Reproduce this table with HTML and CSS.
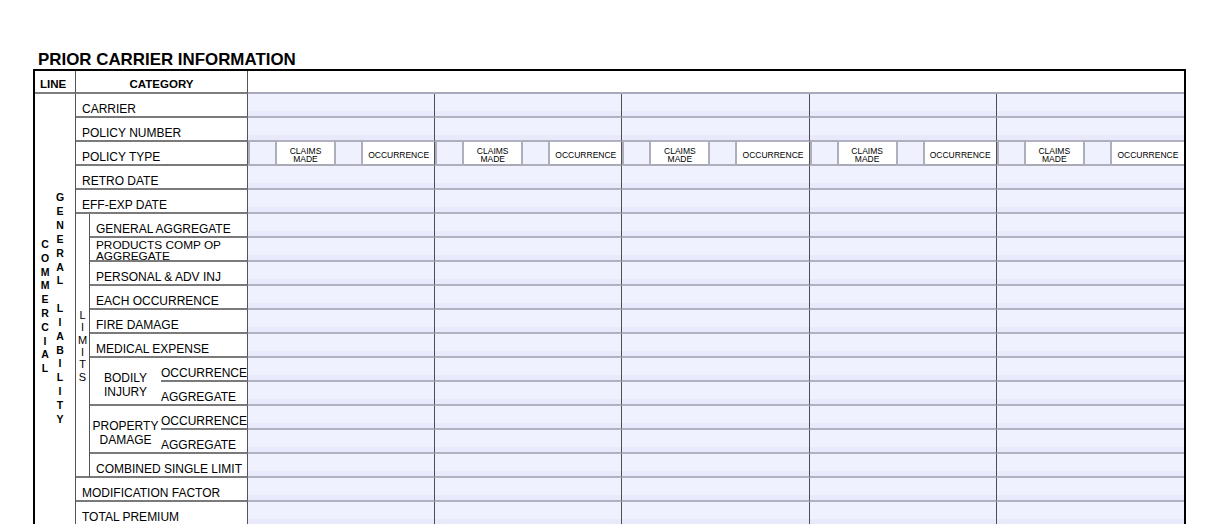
FILE: index.html
```html
<!DOCTYPE html>
<html lang="en">
<head>
<meta charset="utf-8">
<title>Prior Carrier Information</title>
<link rel="stylesheet" href="styles.css">
</head>
<body>
<div class="page">
  <h1 class="title">PRIOR CARRIER INFORMATION</h1>
  <div class="grid">
    <div class="hd hd-line">LINE</div>
    <div class="hd hd-cat">CATEGORY</div>
    <div class="hd-data"></div>

    <div class="linecol">
      <div class="vword">C
O
M
M
E
R
C
I
A
L</div>
      <div class="vword gl">G
E
N
E
R
A
L

L
I
A
B
I
L
I
T
Y</div>
    </div>

    <div class="lab c24 r2">CARRIER</div>
    <div class="lab c24 r3">POLICY NUMBER</div>
    <div class="lab c24 r4">POLICY TYPE</div>
    <div class="lab c24 r5">RETRO DATE</div>
    <div class="lab c24 r6">EFF-EXP DATE</div>

    <div class="limits"><div class="vword thin">L
I
M
I
T
S</div></div>

    <div class="lab c34 r7">GENERAL AGGREGATE</div>
    <div class="lab c34 r8 prod">PRODUCTS COMP OP<br>AGGREGATE</div>
    <div class="lab c34 r9">PERSONAL &amp; ADV INJ</div>
    <div class="lab c34 r10">EACH OCCURRENCE</div>
    <div class="lab c34 r11">FIRE DAMAGE</div>
    <div class="lab c34 r12">MEDICAL EXPENSE</div>

    <div class="lab grp r13">BODILY<br>INJURY</div>
    <div class="lab sub c4 r13">OCCURRENCE</div>
    <div class="lab sub c4 r14">AGGREGATE</div>

    <div class="lab grp r15">PROPERTY<br>DAMAGE</div>
    <div class="lab sub c4 r15">OCCURRENCE</div>
    <div class="lab sub c4 r16">AGGREGATE</div>

    <div class="lab c34 r17">COMBINED SINGLE LIMIT</div>
    <div class="lab c24 r18">MODIFICATION FACTOR</div>
    <div class="lab c24 r19">TOTAL PREMIUM</div>

    <!-- row 2 CARRIER -->
    <div class="dc"></div><div class="dc"></div><div class="dc"></div><div class="dc"></div><div class="dc e"></div>
    <!-- row 3 POLICY NUMBER -->
    <div class="dc"></div><div class="dc"></div><div class="dc"></div><div class="dc"></div><div class="dc e"></div>
    <!-- row 4 POLICY TYPE -->
    <div class="dc pt"><div class="cb"></div><div class="lbl">CLAIMS<br>MADE</div><div class="cb"></div><div class="lbl occ">OCCURRENCE</div></div>
    <div class="dc pt"><div class="cb"></div><div class="lbl">CLAIMS<br>MADE</div><div class="cb"></div><div class="lbl occ">OCCURRENCE</div></div>
    <div class="dc pt"><div class="cb"></div><div class="lbl">CLAIMS<br>MADE</div><div class="cb"></div><div class="lbl occ">OCCURRENCE</div></div>
    <div class="dc pt"><div class="cb"></div><div class="lbl">CLAIMS<br>MADE</div><div class="cb"></div><div class="lbl occ">OCCURRENCE</div></div>
    <div class="dc pt e"><div class="cb"></div><div class="lbl">CLAIMS<br>MADE</div><div class="cb"></div><div class="lbl occ">OCCURRENCE</div></div>
    <!-- rows 5-19 -->
    <div class="dc"></div><div class="dc"></div><div class="dc"></div><div class="dc"></div><div class="dc e"></div>
    <div class="dc"></div><div class="dc"></div><div class="dc"></div><div class="dc"></div><div class="dc e"></div>
    <div class="dc"></div><div class="dc"></div><div class="dc"></div><div class="dc"></div><div class="dc e"></div>
    <div class="dc"></div><div class="dc"></div><div class="dc"></div><div class="dc"></div><div class="dc e"></div>
    <div class="dc"></div><div class="dc"></div><div class="dc"></div><div class="dc"></div><div class="dc e"></div>
    <div class="dc"></div><div class="dc"></div><div class="dc"></div><div class="dc"></div><div class="dc e"></div>
    <div class="dc"></div><div class="dc"></div><div class="dc"></div><div class="dc"></div><div class="dc e"></div>
    <div class="dc"></div><div class="dc"></div><div class="dc"></div><div class="dc"></div><div class="dc e"></div>
    <div class="dc"></div><div class="dc"></div><div class="dc"></div><div class="dc"></div><div class="dc e"></div>
    <div class="dc"></div><div class="dc"></div><div class="dc"></div><div class="dc"></div><div class="dc e"></div>
    <div class="dc"></div><div class="dc"></div><div class="dc"></div><div class="dc"></div><div class="dc e"></div>
    <div class="dc"></div><div class="dc"></div><div class="dc"></div><div class="dc"></div><div class="dc e"></div>
    <div class="dc"></div><div class="dc"></div><div class="dc"></div><div class="dc"></div><div class="dc e"></div>
    <div class="dc"></div><div class="dc"></div><div class="dc"></div><div class="dc"></div><div class="dc e"></div>
    <div class="dc"></div><div class="dc"></div><div class="dc"></div><div class="dc"></div><div class="dc e"></div>
  </div>
</div>
</body>
</html>
```

FILE: styles.css
```css
html, body {
  margin: 0;
  padding: 0;
  background: #fff;
  overflow: hidden;
}

body {
  font-family: "Liberation Sans", Arial, sans-serif;
  color: #000;
}

.page {
  padding: 50px 0 0 33px;
}

.title {
  margin: 0;
  padding-left: 5px;
  font-size: 16.9px;
  line-height: 19px;
  font-weight: 700;
}

.grid {
  display: grid;
  box-sizing: border-box;
  width: 1153px;
  border: 2px solid #000;
  border-bottom: none;
  grid-template-columns: 41px 14px 71px 87px repeat(5, 1fr);
  grid-template-rows: 23px repeat(18, 24px);
}

.grid > div {
  box-sizing: border-box;
  min-width: 0;
}

/* header row */
.hd {
  display: flex;
  align-items: center;
  padding-top: 5px;
  font-size: 11.5px;
  font-weight: 700;
  border-bottom: 2px solid #7d7d7d;
  border-right: 1px solid #555;
}

.hd-line {
  grid-column: 1;
  grid-row: 1;
  padding-left: 5px;
}

.hd-cat {
  grid-column: 2 / 5;
  grid-row: 1;
  justify-content: center;
}

.hd-data {
  grid-column: 5 / 10;
  grid-row: 1;
  background: #fff;
  border-bottom: 2px solid #a8aabc;
}

/* vertical words */
.linecol {
  grid-column: 1;
  grid-row: 2 / 20;
  display: flex;
  align-items: center;
  gap: 1px;
  padding: 0 0 6px 3px;
  border-right: 1px solid #555;
}

.vword {
  width: 14px;
  text-align: center;
  white-space: pre-line;
  font-size: 10.5px;
  font-weight: 700;
  line-height: 13.83px;
}

.vword.gl {
  margin-top: 4px;
}

.limits {
  grid-column: 2;
  grid-row: 7 / 18;
  display: flex;
  align-items: center;
  justify-content: center;
  padding-top: 2px;
  border-right: 1px solid #555;
  border-bottom: 2px solid #7a7a7a;
}

.vword.thin {
  width: 12px;
  font-weight: 400;
  font-size: 11px;
  line-height: 12.4px;
}

/* label cells */
.lab {
  display: flex;
  align-items: center;
  padding: 8px 0 0 6px;
  font-size: 12px;
  white-space: nowrap;
  border-bottom: 2px solid #7a7a7a;
  border-right: 1px solid #555;
}

.c24 { grid-column: 2 / 5; }
.c34 { grid-column: 3 / 5; }
.c4 { grid-column: 4; }

.r2 { grid-row: 2; }
.r3 { grid-row: 3; }
.r4 { grid-row: 4; }
.r5 { grid-row: 5; }
.r6 { grid-row: 6; }
.r7 { grid-row: 7; }
.r8 { grid-row: 8; }
.r9 { grid-row: 9; }
.r10 { grid-row: 10; }
.r11 { grid-row: 11; }
.r12 { grid-row: 12; }
.r13 { grid-row: 13; }
.r14 { grid-row: 14; }
.r15 { grid-row: 15; }
.r16 { grid-row: 16; }
.r17 { grid-row: 17; }
.r18 { grid-row: 18; }
.r19 { grid-row: 19; }

.lab.prod {
  padding-top: 4px;
  font-size: 11.8px;
  line-height: 11px;
}

.lab.grp {
  grid-column: 3;
  grid-row-end: span 2;
  justify-content: center;
  text-align: center;
  padding: 7px 0 0 0;
  line-height: 14px;
  border-right: none;
}

.r13.grp { grid-row: 13 / 15; }
.r15.grp { grid-row: 15 / 17; }

.lab.sub {
  padding-left: 0;
}

/* data cells */
.dc {
  background: linear-gradient(to bottom, #eff1fe 0, #eff1fe calc(100% - 5px), #e8eafb calc(100% - 5px));
  border-bottom: 2px solid #b0b2c4;
  border-right: 1px solid #4f4f4f;
}

.dc.e {
  border-right: none;
}

.dc.pt {
  display: flex;
  background: #fff;
  border-bottom-color: #a9aab6;
}

.cb {
  flex: none;
  width: 29px;
  box-sizing: border-box;
  margin: -2px 0;
  background: #eff1fe;
  border: 2px solid #aeafbc;
}

.lbl {
  flex: none;
  width: 57px;
  display: flex;
  align-items: center;
  justify-content: center;
  text-align: center;
  padding-top: 4px;
  box-sizing: border-box;
  font-size: 8.5px;
  line-height: 8.5px;
  background: #fff;
}

.lbl.occ {
  flex: 1;
  width: auto;
}
```
